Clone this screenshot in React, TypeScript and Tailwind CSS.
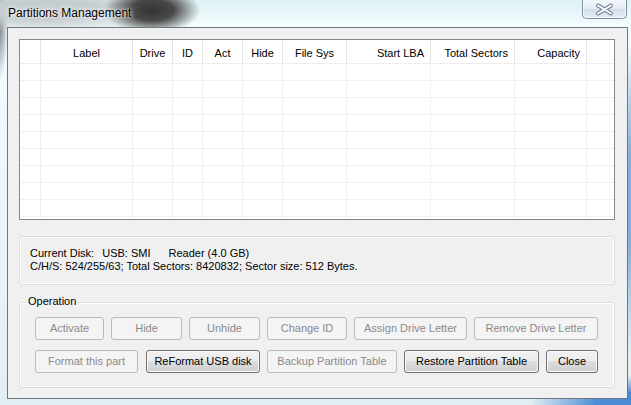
import React from "react";

const cols =
  "grid grid-cols-[21px_92px_40px_30px_40px_40px_64px_84px_84px_72px_27px]";

const headers: { label: string; align: "center" | "right" }[] = [
  { label: "", align: "center" },
  { label: "Label", align: "center" },
  { label: "Drive", align: "center" },
  { label: "ID", align: "center" },
  { label: "Act", align: "center" },
  { label: "Hide", align: "center" },
  { label: "File Sys", align: "center" },
  { label: "Start LBA", align: "right" },
  { label: "Total Sectors", align: "right" },
  { label: "Capacity", align: "right" },
  { label: "", align: "center" },
];

function CloseButton() {
  return (
    <svg width="45" height="19" viewBox="0 0 45 19" className="ml-auto mr-[4px] shrink-0">
      <defs>
        <linearGradient id="cb" x1="0" y1="0" x2="0" y2="1">
          <stop offset="0" stopColor="#f4f8fb" />
          <stop offset="0.5" stopColor="#e3ebf2" />
          <stop offset="0.5" stopColor="#d3dee8" />
          <stop offset="1" stopColor="#e6eef5" />
        </linearGradient>
      </defs>
      <path
        d="M0.5 0 V14.5 Q0.5 18.5 4.5 18.5 H40.5 Q44.5 18.5 44.5 14.5 V0"
        fill="url(#cb)"
        stroke="#7c8da3"
      />
      <path
        d="M1.5 0 V14 Q1.5 17.5 5 17.5 H40 Q43.5 17.5 43.5 14 V0"
        fill="none"
        stroke="#ffffff"
        strokeOpacity="0.7"
      />
      <path d="M16 5.5 L29 13.5 M29 5.5 L16 13.5" stroke="#6f7f92" strokeWidth="4" strokeLinecap="round" />
      <path d="M16 5.5 L29 13.5 M29 5.5 L16 13.5" stroke="#ffffff" strokeWidth="2" strokeLinecap="round" />
    </svg>
  );
}

function Btn({
  label,
  enabled,
  className,
}: {
  label: string;
  enabled?: boolean;
  className: string;
}) {
  const base =
    "h-[23px] shrink-0 rounded-[3px] border text-[11px] flex items-center justify-center";
  const look = enabled
    ? "border-[#707070] text-black bg-[image:linear-gradient(#f2f2f2_0%,#ebebeb_50%,#dddddd_50%,#cfcfcf_100%)] shadow-[inset_0_0_0_1px_#fbfbfb]"
    : "border-[#b7bbbe] text-[#8a8a8a] bg-[#f4f4f4]";
  return <div className={`${base} ${look} ${className}`}>{label}</div>;
}

export default function App() {
  return (
    <div className="w-[631px] h-[405px] overflow-hidden font-['Liberation_Sans',Arial,sans-serif] bg-[#e4f1f6] bg-[image:radial-gradient(ellipse_48px_24px_at_152px_10px,#343434_0%,#4a4a4a_45%,transparent_100%),radial-gradient(ellipse_130px_24px_at_45px_10px,#c6cdd0_40%,transparent_100%),radial-gradient(ellipse_8px_60px_at_0px_20px,#8a949a_20%,transparent_100%),radial-gradient(ellipse_110px_30px_at_640px_405px,#4a8bd4_40%,transparent_100%),radial-gradient(ellipse_14px_160px_at_632px_200px,#7fb0df_30%,transparent_100%),linear-gradient(to_bottom,#dcf1f5_0px,#f3fcfd_26px,#e2eef3_100%)]">
      {/* title bar */}
      <div className="flex h-[27px]">
        <span className="pl-[8px] pt-[6px] text-[12px] leading-[14px] text-black [text-shadow:0_0_6px_#fff,0_0_3px_#fff]">
          Partitions Management
        </span>
        <CloseButton />
      </div>

      {/* client */}
      <div className="ml-[7px] w-[621px] h-[372px] border border-[#6e7780] bg-[#f0f0f0] pl-[11px] pr-[12px] pt-[11px]">
        {/* list view */}
        <div className="h-[181px] border border-[#828790] bg-white overflow-hidden">
          <div className={`${cols} h-[24px] border-b border-[#ededed]`}>
            {headers.map((h, i) => (
              <div
                key={i}
                className={`flex items-center pt-[3px] text-[11px] border-r border-[#e5e5e5] last:border-r-0 ${
                  h.align === "right" ? "justify-end pr-[6px]" : "justify-center"
                }`}
              >
                <span className="text-black">{h.label}</span>
              </div>
            ))}
          </div>
          {Array.from({ length: 10 }).map((_, r) => (
            <div key={r} className={`${cols} h-[17px] border-b border-[#f0f0f0]`}>
              {headers.map((_, i) => (
                <div key={i} className="border-r border-[#f0f0f0] last:border-r-0" />
              ))}
            </div>
          ))}
        </div>

        {/* disk info */}
        <div className="mt-[16px] h-[49px] rounded-[3px] border border-[#d5dfe5] shadow-[inset_0_0_0_1px_#fff] pl-[10px] pt-[10px] text-[11px] leading-[13px] text-black">
          <div className="flex">
            <span>Current Disk:</span>
            <span className="ml-[8px]">USB: SMI</span>
            <span className="ml-[18px]">Reader (4.0 GB)</span>
          </div>
          <div>C/H/S: 524/255/63; Total Sectors: 8420832; Sector size: 512 Bytes.</div>
        </div>

        {/* operation */}
        <div className="relative mt-[17px] h-[86px] rounded-[3px] border border-[#d5dfe5] shadow-[inset_0_0_0_1px_#fff] pl-[15px] pt-[14px]">
          <span className="absolute left-[7px] top-[-8px] bg-[#f0f0f0] px-[1px] text-[11px] leading-[13px] text-black">
            Operation
          </span>
          <div className="flex gap-[7px]">
            <Btn label="Activate" className="w-[69px]" />
            <Btn label="Hide" className="w-[71px]" />
            <Btn label="Unhide" className="w-[71px]" />
            <Btn label="Change ID" className="w-[80px]" />
            <Btn label="Assign Drive Letter" className="w-[113px]" />
            <Btn label="Remove Drive Letter" className="w-[124px]" />
          </div>
          <div className="mt-[10px] flex">
            <Btn label="Format this part" className="w-[103px]" />
            <Btn label="ReFormat USB disk" enabled className="ml-[8px] w-[114px]" />
            <Btn label="Backup Partition Table" className="ml-[7px] w-[130px]" />
            <Btn label="Restore Partition Table" enabled className="ml-[7px] w-[135px]" />
            <Btn label="Close" enabled className="ml-[7px] w-[52px]" />
          </div>
        </div>
      </div>
    </div>
  );
}
